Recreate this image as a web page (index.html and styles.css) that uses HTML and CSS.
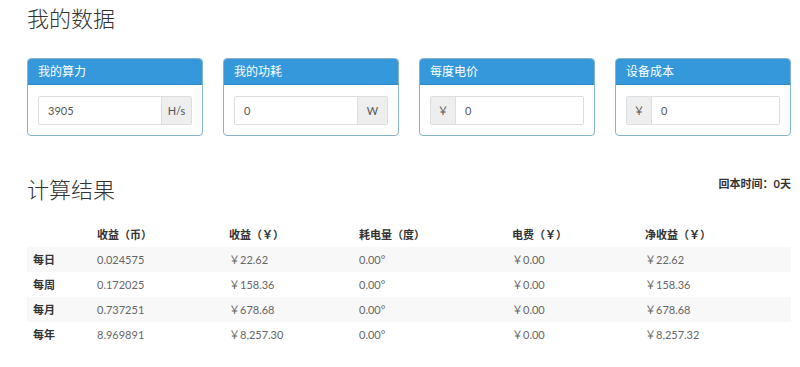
FILE: index.html
```html
<!DOCTYPE html>
<html lang="zh-CN">
<head>
<meta charset="utf-8">
<title>我的数据</title>
<link rel="stylesheet" href="styles.css">
</head>
<body>
<div class="page">
  <h1 class="title">我的数据</h1>
  <div class="cards">
    <div class="panel">
      <div class="panel-head">我的算力</div>
      <div class="panel-body">
        <div class="input-group">
          <div class="input">3905</div>
          <div class="addon addon-right">H/s</div>
        </div>
      </div>
    </div>
    <div class="panel">
      <div class="panel-head">我的功耗</div>
      <div class="panel-body">
        <div class="input-group">
          <div class="input">0</div>
          <div class="addon addon-right">W</div>
        </div>
      </div>
    </div>
    <div class="panel">
      <div class="panel-head">每度电价</div>
      <div class="panel-body">
        <div class="input-group">
          <div class="addon addon-left">￥</div>
          <div class="input">0</div>
        </div>
      </div>
    </div>
    <div class="panel">
      <div class="panel-head">设备成本</div>
      <div class="panel-body">
        <div class="input-group">
          <div class="addon addon-left">￥</div>
          <div class="input">0</div>
        </div>
      </div>
    </div>
  </div>

  <div class="result-head">
    <h2 class="title title2">计算结果</h2>
    <div class="payback">回本时间：0天</div>
  </div>

  <table class="results">
    <colgroup>
      <col class="c1"><col class="c2"><col class="c3"><col class="c4"><col class="c5"><col class="c6">
    </colgroup>
    <thead>
      <tr><th></th><th>收益（币）</th><th>收益（￥）</th><th>耗电量（度）</th><th>电费（￥）</th><th>净收益（￥）</th></tr>
    </thead>
    <tbody>
      <tr class="odd"><th>每日</th><td>0.024575</td><td>￥22.62</td><td>0.00°</td><td>￥0.00</td><td>￥22.62</td></tr>
      <tr><th>每周</th><td>0.172025</td><td>￥158.36</td><td>0.00°</td><td>￥0.00</td><td>￥158.36</td></tr>
      <tr class="odd"><th>每月</th><td>0.737251</td><td>￥678.68</td><td>0.00°</td><td>￥0.00</td><td>￥678.68</td></tr>
      <tr><th>每年</th><td>8.969891</td><td>￥8,257.30</td><td>0.00°</td><td>￥0.00</td><td>￥8,257.32</td></tr>
    </tbody>
  </table>
</div>
</body>
</html>
```
FILE: styles.css
```css
html, body {
  margin: 0;
  padding: 0;
  background: #fff;
}
body {
  font-family: Lato, "Noto Sans CJK SC", sans-serif;
  color: #333;
}
.page {
  padding: 0 9px 0 27px;
}
.title {
  margin: 7px 0 0 0;
  font-size: 22px;
  line-height: 24px;
  font-weight: 300;
  color: #333;
}
.cards {
  display: grid;
  grid-template-columns: repeat(4, 1fr);
  column-gap: 20px;
  margin-top: 27px;
}
.panel {
  border: 1px solid #86b3cc;
  border-radius: 4px;
  overflow: hidden;
}
.panel-head {
  background: #3498db;
  color: #fff;
  font-size: 12px;
  line-height: 25px;
  height: 25px;
  padding: 0 10px;
  border-bottom: 1px solid #2d8bcb;
}
.panel-body {
  padding: 11px 10px 10px 10px;
}
.input-group {
  display: flex;
  height: 27px;
  border: 1px solid #dadfe3;
  border-radius: 2px;
  overflow: hidden;
}
.input {
  flex: 1;
  background: #fff;
  font-size: 11px;
  line-height: 27px;
  padding-left: 9px;
  color: #555;
}
.addon {
  background: #eeeeee;
  color: #555;
  font-size: 11px;
  line-height: 27px;
  text-align: center;
}
.addon-right {
  width: 29px;
  border-left: 1px solid #dadfe3;
}
.addon-left {
  width: 24px;
  border-right: 1px solid #dadfe3;
}
.result-head {
  display: flex;
  justify-content: space-between;
  align-items: flex-start;
  margin-top: 42px;
}
.title2 {
  margin: 0;
}
.payback {
  font-size: 11px;
  font-weight: bold;
  color: #333;
  line-height: 14px;
  margin-top: -1px;
}
.results {
  width: 100%;
  border-collapse: collapse;
  margin-top: 20px;
  font-size: 11px;
}
.c1 { width: 64px; }
.c2 { width: 132px; }
.c3 { width: 130px; }
.c4 { width: 153px; }
.c5 { width: 133px; }
.c6 { width: 152px; }
.results th, .results td {
  text-align: left;
  padding: 0 6px;
  height: 25px;
  line-height: 14px;
  white-space: nowrap;
}
.results th {
  font-weight: bold;
  color: #333;
}
.results td {
  color: #666;
}
.results tr.odd {
  background: #f8f8f8;
}
```
